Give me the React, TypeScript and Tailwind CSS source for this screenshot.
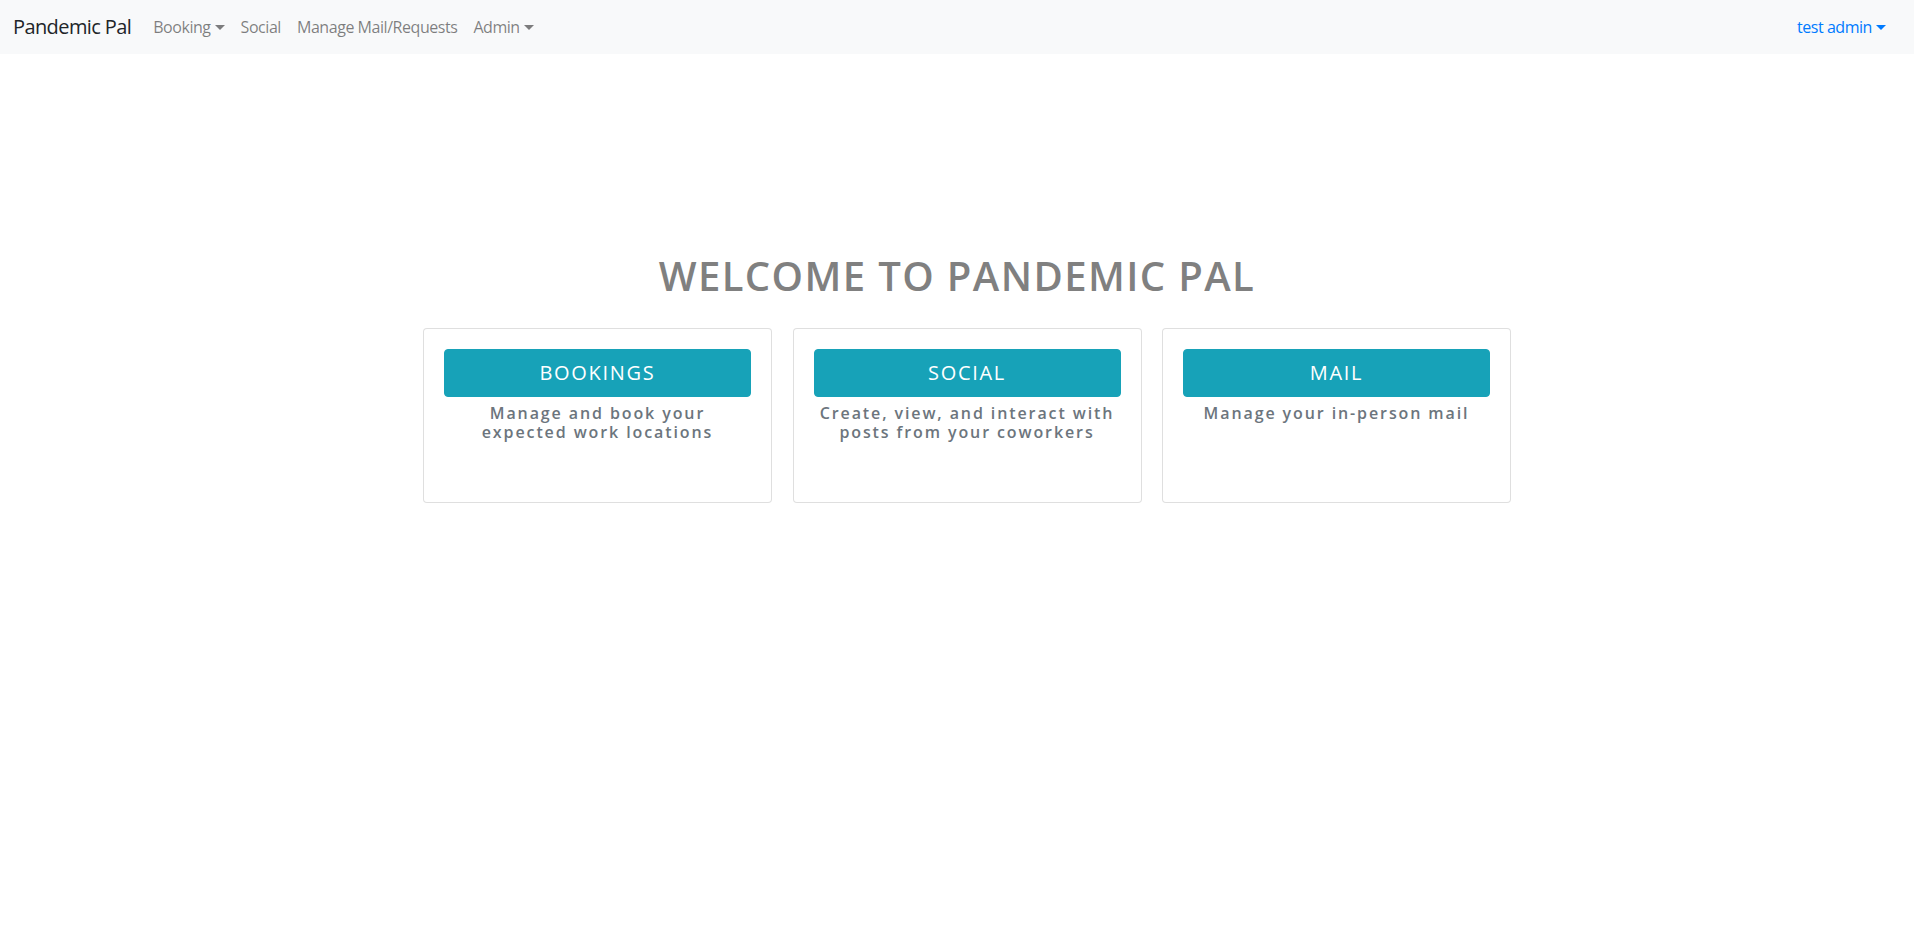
import React from 'react';

const Caret: React.FC = () => (
  <span className="ml-[4px] inline-block h-0 w-0 border-x-[5px] border-t-[5px] border-x-transparent border-t-current align-[3px]" />
);

const cards = [
  { title: 'BOOKINGS', text: 'Manage and book your expected work locations' },
  { title: 'SOCIAL', text: 'Create, view, and interact with posts from your coworkers' },
  { title: 'MAIL', text: 'Manage your in-person mail' },
];

const App: React.FC = () => {
  return (
    <div className="min-h-screen bg-white font-['Segoe_UI','Open_Sans',sans-serif]">
      <nav className="flex h-[54px] items-center bg-[#f8f9fa] pl-[13px] pr-[20px]">
        <a className="mr-[14px] text-[20px] leading-[30px] tracking-[-0.6px] text-[#212529]">Pandemic Pal</a>
        <ul className="flex items-center text-[16px] tracking-[-0.45px] text-black/50">
          <li className="px-2">Booking<Caret /></li>
          <li className="px-2">Social</li>
          <li className="px-2">Manage Mail/Requests</li>
          <li className="px-2">Admin<Caret /></li>
        </ul>
        <div className="ml-auto px-2 text-[16px] tracking-[-0.45px] text-[#007bff]">
          test admin<Caret />
        </div>
      </nav>

      <main className="mx-auto w-[1110px] pt-[198px]">
        <h1 className="mb-[28px] text-center text-[40px] font-semibold leading-[48px] tracking-[1.4px] text-[#808080]">
          WELCOME TO PANDEMIC PAL
        </h1>
        <div className="flex gap-[20.5px] pl-[21px]">
          {cards.map((c) => (
            <div
              key={c.title}
              className="h-[175px] w-[349px] rounded-[4px] border border-black/[0.125] bg-white p-5"
            >
              <button className="w-full rounded-[4px] border border-[#17a2b8] bg-[#17a2b8] py-2 text-[20px] leading-[30px] tracking-[1.7px] text-white">
                {c.title}
              </button>
              <p className="mt-[7px] text-center text-[16px] font-semibold leading-[19px] tracking-[1.9px] text-[#6c757d]">
                {c.text}
              </p>
            </div>
          ))}
        </div>
      </main>
    </div>
  );
};

export default App;
